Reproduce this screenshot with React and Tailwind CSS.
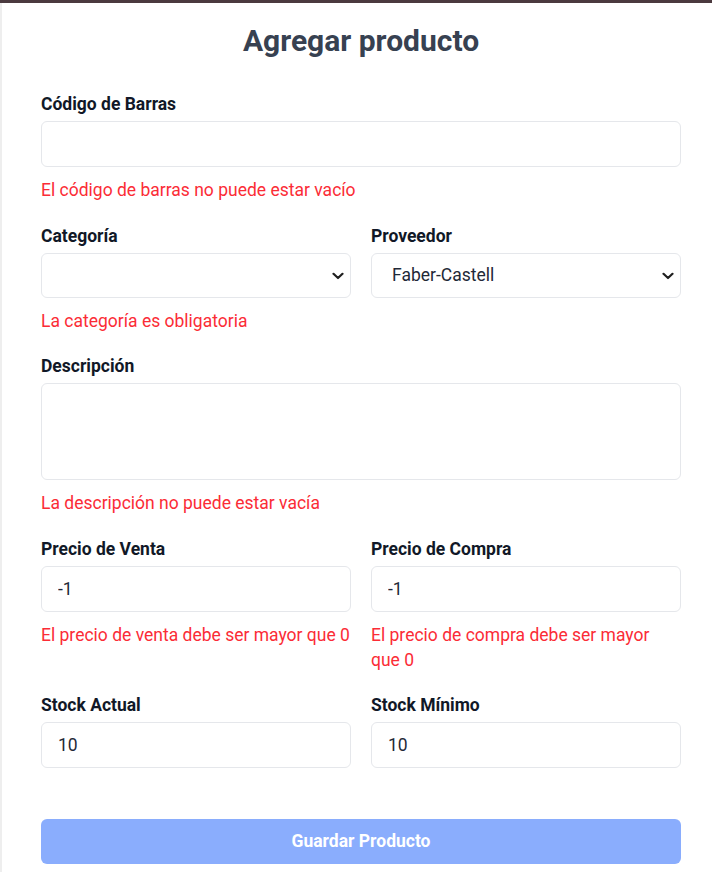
import React from "react";

const font = { fontFamily: "Roboto, 'Noto Sans', sans-serif" };

function Label({ children }) {
  return <label className="block text-[17.5px] leading-6 font-bold text-[#111827] mb-[5px]">{children}</label>;
}

function Err({ children }) {
  return <p className="mt-[11px] text-[17.5px] leading-[25px] text-[#fb2c36]">{children}</p>;
}

function Input({ value }) {
  return (
    <input
      readOnly
      defaultValue={value}
      className="block w-full h-[46px] px-4 rounded-md border border-[#e5e7eb] bg-white text-[17.5px] text-[#1f2937] outline-none"
    />
  );
}

function Select({ value }) {
  return (
    <div className="relative">
      <select
        defaultValue={value}
        className="block w-full h-[45px] pl-[20px] pr-8 rounded-md border border-[#e5e7eb] bg-white text-[17.5px] text-[#1f2937] outline-none appearance-none"
      >
        <option value=""></option>
        <option value="Faber-Castell">Faber-Castell</option>
      </select>
      <svg
        className="absolute right-[7px] top-1/2 -translate-y-1/2 pointer-events-none"
        width="12"
        height="8"
        viewBox="0 0 12 8"
        fill="none"
      >
        <path d="M1.5 1.8 L6 6 L10.5 1.8" stroke="#1f1f1f" strokeWidth="2.2" strokeLinecap="round" strokeLinejoin="round" />
      </svg>
    </div>
  );
}

export default function App() {
  return (
    <div className="min-h-[872px] bg-white" style={font}>
      <div className="h-[3px] bg-[#4b3a3f]" />
      <div className="w-[722px] border-l-2 border-[#eeeeee] pl-[39px] pr-[41px] pt-[18px] pb-[9px]">
        <h1 className="text-center text-[30px] leading-[40px] font-bold text-[#374151] mb-[31px]">Agregar producto</h1>

        <div>
          <Label>Código de Barras</Label>
          <Input value="" />
          <Err>El código de barras no puede estar vacío</Err>
        </div>

        <div className="grid grid-cols-2 gap-x-5 mt-[21px]">
          <div>
            <Label>Categoría</Label>
            <Select value="" />
            <Err>La categoría es obligatoria</Err>
          </div>
          <div>
            <Label>Proveedor</Label>
            <Select value="Faber-Castell" />
          </div>
        </div>

        <div className="mt-[20px]">
          <Label>Descripción</Label>
          <textarea
            readOnly
            className="block w-full h-[97px] px-4 py-2 rounded-md border border-[#e5e7eb] bg-white text-[17.5px] outline-none resize-none"
          />
          <Err>La descripción no puede estar vacía</Err>
        </div>

        <div className="grid grid-cols-2 gap-x-5 mt-[21px]">
          <div>
            <Label>Precio de Venta</Label>
            <Input value="-1" />
            <Err>El precio de venta debe ser mayor que 0</Err>
          </div>
          <div>
            <Label>Precio de Compra</Label>
            <Input value="-1" />
            <Err>El precio de compra debe ser mayor que 0</Err>
          </div>
        </div>

        <div className="grid grid-cols-2 gap-x-5 mt-[20px]">
          <div>
            <Label>Stock Actual</Label>
            <Input value="10" />
          </div>
          <div>
            <Label>Stock Mínimo</Label>
            <Input value="10" />
          </div>
        </div>

        <button className="mt-[51px] block w-full h-[45px] rounded-md bg-[#8aadfd] text-white font-bold text-[17.5px]">
          Guardar Producto
        </button>
      </div>
    </div>
  );
}
